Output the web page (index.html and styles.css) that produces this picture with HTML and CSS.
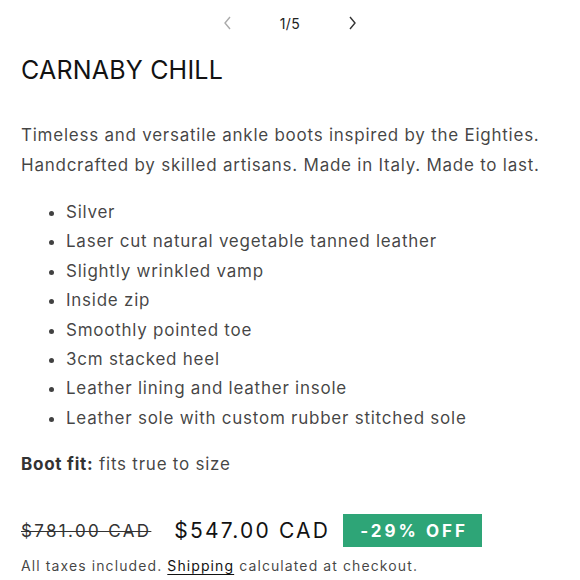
FILE: index.html
```html
<!DOCTYPE html>
<html>
<head>
<meta charset="utf-8">
<link rel="stylesheet" href="styles.css">
</head>
<body>
<div class="page">
  <nav class="pager">
    <span class="arrow disabled"><svg width="12" height="14" viewBox="0 0 12 14"><path d="M8 1 L3 7 L8 13" fill="none" stroke="currentColor" stroke-width="1.4"/></svg></span>
    <span class="count">1/5</span>
    <span class="arrow"><svg width="12" height="14" viewBox="0 0 12 14"><path d="M4 1 L9 7 L4 13" fill="none" stroke="currentColor" stroke-width="1.4"/></svg></span>
  </nav>
  <h1 class="title">CARNABY CHILL</h1>
  <p class="desc">Timeless and versatile ankle boots inspired by the Eighties. Handcrafted by skilled artisans. Made in Italy. Made to last.</p>
  <ul class="features">
    <li>Silver</li>
    <li>Laser cut natural vegetable tanned leather</li>
    <li>Slightly wrinkled vamp</li>
    <li>Inside zip</li>
    <li>Smoothly pointed toe</li>
    <li>3cm stacked heel</li>
    <li>Leather lining and leather insole</li>
    <li>Leather sole with custom rubber stitched sole</li>
  </ul>
  <p class="fit"><strong>Boot fit:</strong> fits true to size</p>
  <div class="price">
    <s class="old">$781.00 CAD</s>
    <span class="new">$547.00 CAD</span>
    <span class="badge">-29% OFF</span>
  </div>
  <p class="tax">All taxes included. <a href="#">Shipping</a> calculated at checkout.</p>
</div>
</body>
</html>
```
FILE: styles.css
```css
* { box-sizing: border-box; }
body {
  margin: 0;
  background: #fff;
  font-family: Inter, "Noto Sans", sans-serif;
  color: rgba(18,18,18,0.8);
}
.page { padding: 0 21px; }
.pager {
  display: flex;
  justify-content: center;
  align-items: center;
  gap: 46px;
  height: 46px;
  font-size: 14px;
  color: #222;
}
.arrow { display: flex; color: #333; }
.arrow.disabled { color: #aaa; }
.count { letter-spacing: 0.5px; }
.title {
  margin: 8px 0 0;
  font-size: 25px;
  font-weight: 400;
  letter-spacing: 0.2px;
  color: #121212;
  line-height: 32px;
}
.desc {
  margin: 34px 0 0;
  font-size: 17px;
  line-height: 30px;
  letter-spacing: 0.75px;
}
.features {
  margin: 18px 0 0;
  padding-left: 45px;
  font-size: 17px;
  line-height: 29.4px;
  letter-spacing: 0.75px;
}
.fit {
  margin: 18px 0 0;
  font-size: 17px;
  letter-spacing: 0.75px;
  line-height: 26px;
}
.fit strong { font-weight: 700; color: #333; }
.price {
  margin-top: 37px;
  display: flex;
  align-items: center;
}
.old { font-size: 17px; letter-spacing: 2.35px; color: #333; }
.new { font-size: 21px; letter-spacing: 2.2px; color: #121212; margin-left: 23px; }
.badge {
  margin-left: 13px;
  background: #2ea577;
  color: #fff;
  font-weight: 700;
  font-size: 17px;
  letter-spacing: 3px;
  width: 139px;
  height: 33px;
  display: flex;
  align-items: center;
  justify-content: center;
  padding-left: 3px;
}
.tax {
  margin: 7px 0 0;
  font-size: 14px;
  letter-spacing: 1.1px;
  line-height: 24px;
}
.tax a { color: #121212; text-decoration: underline; text-underline-offset: 3px; }
```
